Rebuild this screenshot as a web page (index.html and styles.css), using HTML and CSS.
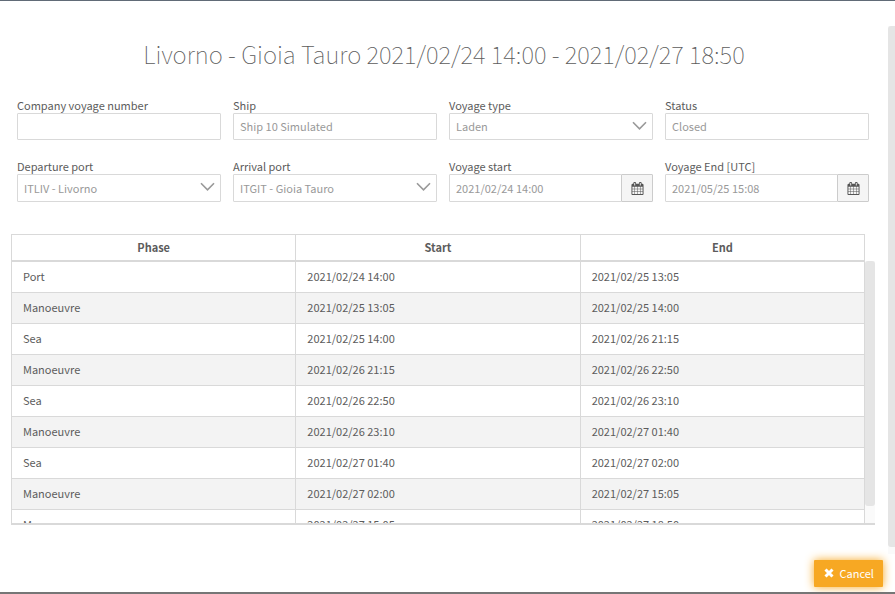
FILE: index.html
```html
<!DOCTYPE html>
<html lang="en">
<head>
<meta charset="utf-8">
<meta name="viewport" content="width=device-width, initial-scale=1">
<title>Voyage details</title>
<link rel="stylesheet" href="styles.css">
</head>
<body>
<svg class="sprite" aria-hidden="true">
  <symbol id="calendar" viewBox="0 0 1664 1792">
    <path d="M128 1664h288v-288H128v288zm352 0h320v-288H480v288zM128 1312h288V992H128v320zm352 0h320V992H480v320zM128 928h288V640H128v288zm736 736h320v-288H864v288zM480 928h320V640H480v288zm768 736h288v-288h-288v288zM864 1312h320V992H864v320zM512 448V160q0-13-9.500-22.500T480 128h-64q-13 0-22.500 9.500T384 160v288q0 13 9.500 22.500T416 480h64q13 0 22.500-9.500T512 448zm736 864h288V992h-288v320zM864 928h320V640H864v288zm384 0h288V640h-288v288zm32-480V160q0-13-9.500-22.500T1248 128h-64q-13 0-22.500 9.500T1152 160v288q0 13 9.500 22.500t22.500 9.500h64q13 0 22.500-9.500t9.500-22.500zm384-64v1280q0 52-38 90t-90 38H128q-52 0-90-38t-38-90V384q0-52 38-90t90-38h128v-96q0-66 47-113T416 0h64q66 0 113 47t47 113v96h384v-96q0-66 47-113t113-47h64q66 0 113 47t47 113v96h128q52 0 90 38t38 90z"/>
  </symbol>
</svg>
<main class="dialog">
  <div class="content">
    <h1 class="title">Livorno - Gioia Tauro 2021/02/24 14:00 - 2021/02/27 18:50</h1>
    <form class="fields">
      <div class="field">
        <label for="number">Company voyage number</label>
        <input class="control" id="number" type="text">
      </div>
      <div class="field">
        <label for="ship">Ship</label>
        <input class="control" id="ship" type="text" value="Ship 10 Simulated">
      </div>
      <div class="field">
        <label for="type">Voyage type</label>
        <div class="select">
          <select class="control" id="type"><option>Laden</option></select>
          <svg class="chevron" viewBox="0 0 12 8" aria-hidden="true"><path d="M0 1l6 6 6-6"/></svg>
        </div>
      </div>
      <div class="field">
        <label for="status">Status</label>
        <input class="control" id="status" type="text" value="Closed">
      </div>
      <div class="field">
        <label for="departure">Departure port</label>
        <div class="select">
          <select class="control" id="departure"><option>ITLIV - Livorno</option></select>
          <svg class="chevron" viewBox="0 0 12 8" aria-hidden="true"><path d="M0 1l6 6 6-6"/></svg>
        </div>
      </div>
      <div class="field">
        <label for="arrival">Arrival port</label>
        <div class="select">
          <select class="control" id="arrival"><option>ITGIT - Gioia Tauro</option></select>
          <svg class="chevron" viewBox="0 0 12 8" aria-hidden="true"><path d="M0 1l6 6 6-6"/></svg>
        </div>
      </div>
      <div class="field">
        <label for="start">Voyage start</label>
        <div class="group">
          <input class="control" id="start" type="text" value="2021/02/24 14:00">
          <button class="addon" type="button" aria-label="Pick voyage start"><svg><use href="#calendar"/></svg></button>
        </div>
      </div>
      <div class="field">
        <label for="end">Voyage End [UTC]</label>
        <div class="group">
          <input class="control" id="end" type="text" value="2021/05/25 15:08">
          <button class="addon" type="button" aria-label="Pick voyage end"><svg><use href="#calendar"/></svg></button>
        </div>
      </div>
    </form>
    <div class="phases">
      <table>
        <thead><tr><th>Phase</th><th>Start</th><th>End</th></tr></thead>
        <tbody>
          <tr><td>Port</td><td>2021/02/24 14:00</td><td>2021/02/25 13:05</td></tr>
          <tr><td>Manoeuvre</td><td>2021/02/25 13:05</td><td>2021/02/25 14:00</td></tr>
          <tr><td>Sea</td><td>2021/02/25 14:00</td><td>2021/02/26 21:15</td></tr>
          <tr><td>Manoeuvre</td><td>2021/02/26 21:15</td><td>2021/02/26 22:50</td></tr>
          <tr><td>Sea</td><td>2021/02/26 22:50</td><td>2021/02/26 23:10</td></tr>
          <tr><td>Manoeuvre</td><td>2021/02/26 23:10</td><td>2021/02/27 01:40</td></tr>
          <tr><td>Sea</td><td>2021/02/27 01:40</td><td>2021/02/27 02:00</td></tr>
          <tr><td>Manoeuvre</td><td>2021/02/27 02:00</td><td>2021/02/27 15:05</td></tr>
          <tr><td>Manoeuvre</td><td>2021/02/27 15:05</td><td>2021/02/27 18:50</td></tr>
        </tbody>
      </table>
      <div class="track"><div class="thumb"></div></div>
    </div>
    <footer class="actions">
      <button class="cancel" type="button">
        <svg viewBox="0 0 10 10" aria-hidden="true"><path d="M1.500 1.500l7 7M8.500 1.500l-7 7"/></svg>
        Cancel
      </button>
    </footer>
  </div>
  <div class="page-track"><div class="thumb"></div></div>
</main>
</body>
</html>
```
FILE: styles.css
```css
* { box-sizing: border-box; }

body {
  margin: 0;
  color: #5c5c5c;
  background: #fff;
  font: 11px/16px "Noto Sans CJK SC", "Noto Sans", sans-serif;
}

.sprite { display: none; }

.dialog {
  display: flex;
  height: 100vh;
  overflow: hidden;
  border-top: 1px solid #616b77;
  border-bottom: 2px solid #767676;
}

.content {
  display: flex;
  flex: 1;
  flex-direction: column;
  min-width: 0;
}

.title {
  margin: 35px 0 26px;
  font-size: 24px;
  font-weight: 100;
  line-height: 36px;
  text-align: center;
}

.fields {
  display: grid;
  grid-template-columns: repeat(4, minmax(0, 1fr));
  gap: 19px 12px;
  padding: 0 19px 0 17px;
}

.field label {
  display: block;
  padding-bottom: 1px;
  line-height: 14px;
}

.control {
  display: block;
  width: 100%;
  height: 27px;
  margin: 0;
  padding: 0 6px 1px;
  border: 1px solid #d9d9d9;
  border-radius: 1px;
  background: #fff;
  color: #999;
  font: inherit;
  appearance: none;
}

.field:nth-child(n + 5) .control { height: 28px; }

.select { position: relative; }

.chevron {
  position: absolute;
  top: 8px;
  right: 7px;
  width: 13px;
  height: 9px;
  overflow: visible;
  fill: none;
  stroke: #999;
  stroke-width: 1.5;
  pointer-events: none;
}

.group { display: flex; }
.group .control { flex: 1; min-width: 0; }

.addon {
  display: flex;
  align-items: center;
  justify-content: center;
  width: 32px;
  margin-left: -1px;
  padding: 0;
  border: 1px solid #ccc;
  border-radius: 1px;
  background: #f5f5f5;
}

.addon svg { width: 13px; height: 13px; fill: #555; }

.phases {
  display: flex;
  height: 291px;
  margin: 32px 13px 0 11px;
  overflow: hidden;
  border-bottom: 2px solid #d9d9d9;
}

table {
  flex: 1;
  width: 100%;
  height: max-content;
  border: solid #d9d9d9;
  border-width: 1px 0 0 1px;
  border-spacing: 0;
  table-layout: fixed;
}

th, td {
  padding: 0 11px 1px;
  border: solid #d9d9d9;
  border-width: 0 1px 1px 0;
  text-align: left;
}

th {
  height: 27px;
  border-bottom-width: 2px;
  text-align: center;
}

td { height: 31px; padding-bottom: 2px; }
tbody tr:nth-child(even) { background: #f3f3f3; }

.track {
  flex: none;
  width: 10px;
  margin-top: 27px;
  background: #fafafa;
}

.thumb { border-radius: 3px; background: #e5e5e5; }
.track .thumb { height: 245px; }

.page-track {
  width: 7px;
  margin: 25px 0 38px;
  background: #fafafa;
}

.page-track .thumb { height: 521px; border-radius: 3px 0 0 3px; }

.actions {
  display: flex;
  justify-content: flex-end;
  margin-top: 35px;
  padding-right: 5px;
}

.cancel {
  display: flex;
  align-items: center;
  gap: 6px;
  height: 27px;
  padding: 0 9px 1px 10px;
  border: 0;
  border-radius: 1px;
  background: #f7a823;
  box-shadow: 0 0 10px #f7a823;
  color: #fff;
  font: inherit;
}

.cancel svg {
  width: 10px;
  height: 10px;
  stroke: #fff;
  stroke-width: 3;
}
```
